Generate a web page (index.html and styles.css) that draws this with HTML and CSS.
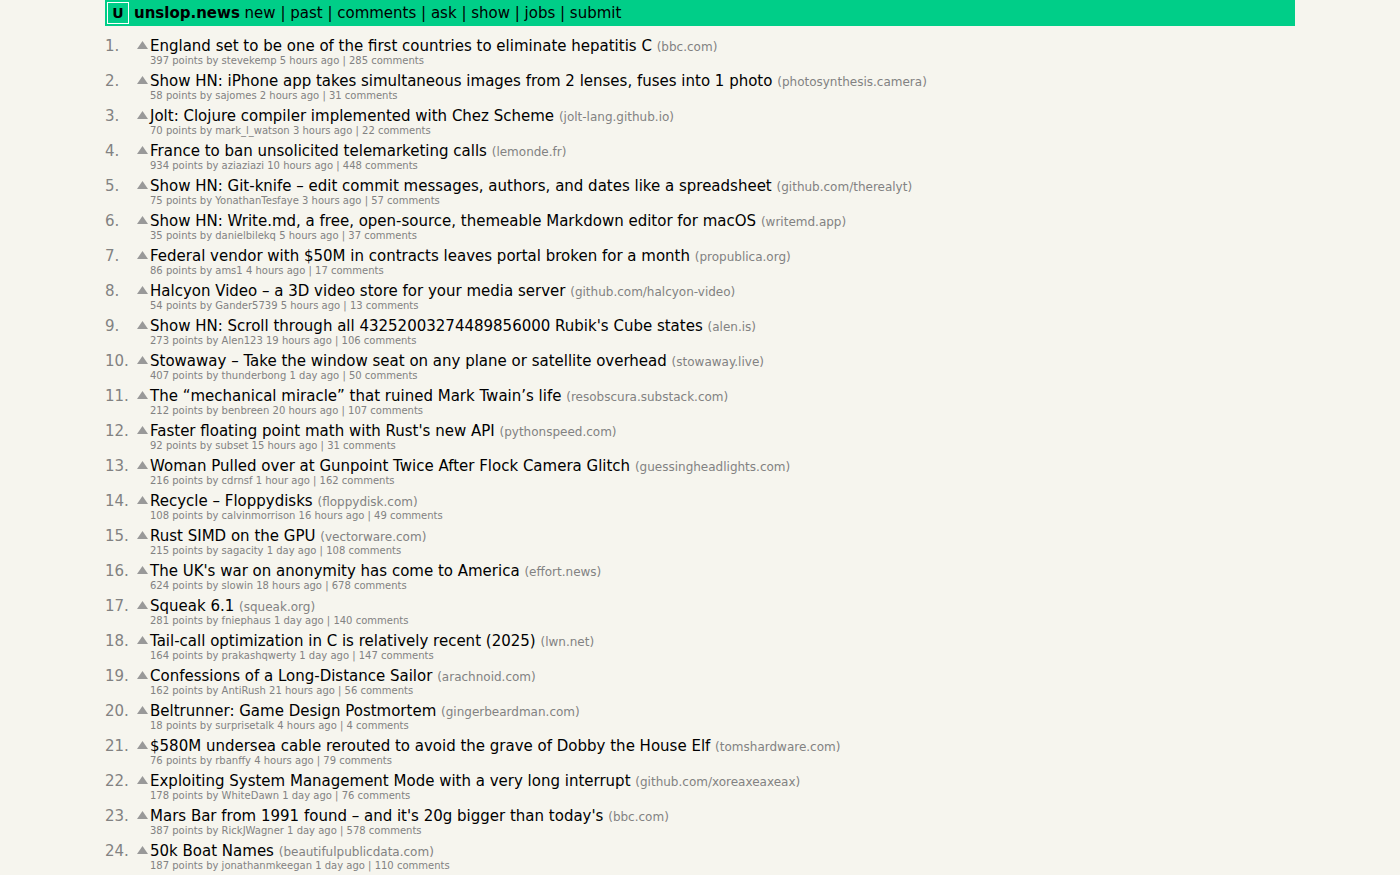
FILE: index.html
```html
<!DOCTYPE html>
<html lang="en">
<head>
    <meta charset="UTF-8">
    <meta name="viewport" content="width=device-width, initial-scale=1.0">
    <title>unslop.news</title>
    <link rel="stylesheet" href="styles.css">
</head>
<body>
    <div class="page">
        <header class="topbar">
            <a class="logo" href="#">U</a>
            <nav><a class="brand" href="#">unslop.news</a> <a href="#">new</a> | <a href="#">past</a> | <a href="#">comments</a> | <a href="#">ask</a> | <a href="#">show</a> | <a href="#">jobs</a> | <a href="#">submit</a></nav>
        </header>
        <main class="stories">
            <article class="story">
                <span class="rank">1.</span>
                <button class="vote" aria-label="upvote"></button>
                <div class="title"><a href="#">England set to be one of the first countries to eliminate hepatitis C</a> <span class="site">(<a href="#">bbc.com</a>)</span></div>
                <div class="subtext">397 points by <a href="#">stevekemp</a> 5 hours ago | <a href="#">285 comments</a></div>
            </article>
            <article class="story">
                <span class="rank">2.</span>
                <button class="vote" aria-label="upvote"></button>
                <div class="title"><a href="#">Show HN: iPhone app takes simultaneous images from 2 lenses, fuses into 1 photo</a> <span class="site">(<a href="#">photosynthesis.camera</a>)</span></div>
                <div class="subtext">58 points by <a href="#">sajomes</a> 2 hours ago | <a href="#">31 comments</a></div>
            </article>
            <article class="story">
                <span class="rank">3.</span>
                <button class="vote" aria-label="upvote"></button>
                <div class="title"><a href="#">Jolt: Clojure compiler implemented with Chez Scheme</a> <span class="site">(<a href="#">jolt-lang.github.io</a>)</span></div>
                <div class="subtext">70 points by <a href="#">mark_l_watson</a> 3 hours ago | <a href="#">22 comments</a></div>
            </article>
            <article class="story">
                <span class="rank">4.</span>
                <button class="vote" aria-label="upvote"></button>
                <div class="title"><a href="#">France to ban unsolicited telemarketing calls</a> <span class="site">(<a href="#">lemonde.fr</a>)</span></div>
                <div class="subtext">934 points by <a href="#">aziaziazi</a> 10 hours ago | <a href="#">448 comments</a></div>
            </article>
            <article class="story">
                <span class="rank">5.</span>
                <button class="vote" aria-label="upvote"></button>
                <div class="title"><a href="#">Show HN: Git-knife – edit commit messages, authors, and dates like a spreadsheet</a> <span class="site">(<a href="#">github.com/therealyt</a>)</span></div>
                <div class="subtext">75 points by <a href="#">YonathanTesfaye</a> 3 hours ago | <a href="#">57 comments</a></div>
            </article>
            <article class="story">
                <span class="rank">6.</span>
                <button class="vote" aria-label="upvote"></button>
                <div class="title"><a href="#">Show HN: Write.md, a free, open-source, themeable Markdown editor for macOS</a> <span class="site">(<a href="#">writemd.app</a>)</span></div>
                <div class="subtext">35 points by <a href="#">danielbilekq</a> 5 hours ago | <a href="#">37 comments</a></div>
            </article>
            <article class="story">
                <span class="rank">7.</span>
                <button class="vote" aria-label="upvote"></button>
                <div class="title"><a href="#">Federal vendor with $50M in contracts leaves portal broken for a month</a> <span class="site">(<a href="#">propublica.org</a>)</span></div>
                <div class="subtext">86 points by <a href="#">ams1</a> 4 hours ago | <a href="#">17 comments</a></div>
            </article>
            <article class="story">
                <span class="rank">8.</span>
                <button class="vote" aria-label="upvote"></button>
                <div class="title"><a href="#">Halcyon Video – a 3D video store for your media server</a> <span class="site">(<a href="#">github.com/halcyon-video</a>)</span></div>
                <div class="subtext">54 points by <a href="#">Gander5739</a> 5 hours ago | <a href="#">13 comments</a></div>
            </article>
            <article class="story">
                <span class="rank">9.</span>
                <button class="vote" aria-label="upvote"></button>
                <div class="title"><a href="#">Show HN: Scroll through all 43252003274489856000 Rubik's Cube states</a> <span class="site">(<a href="#">alen.is</a>)</span></div>
                <div class="subtext">273 points by <a href="#">Alen123</a> 19 hours ago | <a href="#">106 comments</a></div>
            </article>
            <article class="story">
                <span class="rank">10.</span>
                <button class="vote" aria-label="upvote"></button>
                <div class="title"><a href="#">Stowaway – Take the window seat on any plane or satellite overhead</a> <span class="site">(<a href="#">stowaway.live</a>)</span></div>
                <div class="subtext">407 points by <a href="#">thunderbong</a> 1 day ago | <a href="#">50 comments</a></div>
            </article>
            <article class="story">
                <span class="rank">11.</span>
                <button class="vote" aria-label="upvote"></button>
                <div class="title"><a href="#">The “mechanical miracle” that ruined Mark Twain’s life</a> <span class="site">(<a href="#">resobscura.substack.com</a>)</span></div>
                <div class="subtext">212 points by <a href="#">benbreen</a> 20 hours ago | <a href="#">107 comments</a></div>
            </article>
            <article class="story">
                <span class="rank">12.</span>
                <button class="vote" aria-label="upvote"></button>
                <div class="title"><a href="#">Faster floating point math with Rust's new API</a> <span class="site">(<a href="#">pythonspeed.com</a>)</span></div>
                <div class="subtext">92 points by <a href="#">subset</a> 15 hours ago | <a href="#">31 comments</a></div>
            </article>
            <article class="story">
                <span class="rank">13.</span>
                <button class="vote" aria-label="upvote"></button>
                <div class="title"><a href="#">Woman Pulled over at Gunpoint Twice After Flock Camera Glitch</a> <span class="site">(<a href="#">guessingheadlights.com</a>)</span></div>
                <div class="subtext">216 points by <a href="#">cdrnsf</a> 1 hour ago | <a href="#">162 comments</a></div>
            </article>
            <article class="story">
                <span class="rank">14.</span>
                <button class="vote" aria-label="upvote"></button>
                <div class="title"><a href="#">Recycle – Floppydisks</a> <span class="site">(<a href="#">floppydisk.com</a>)</span></div>
                <div class="subtext">108 points by <a href="#">calvinmorrison</a> 16 hours ago | <a href="#">49 comments</a></div>
            </article>
            <article class="story">
                <span class="rank">15.</span>
                <button class="vote" aria-label="upvote"></button>
                <div class="title"><a href="#">Rust SIMD on the GPU</a> <span class="site">(<a href="#">vectorware.com</a>)</span></div>
                <div class="subtext">215 points by <a href="#">sagacity</a> 1 day ago | <a href="#">108 comments</a></div>
            </article>
            <article class="story">
                <span class="rank">16.</span>
                <button class="vote" aria-label="upvote"></button>
                <div class="title"><a href="#">The UK's war on anonymity has come to America</a> <span class="site">(<a href="#">effort.news</a>)</span></div>
                <div class="subtext">624 points by <a href="#">slowin</a> 18 hours ago | <a href="#">678 comments</a></div>
            </article>
            <article class="story">
                <span class="rank">17.</span>
                <button class="vote" aria-label="upvote"></button>
                <div class="title"><a href="#">Squeak 6.1</a> <span class="site">(<a href="#">squeak.org</a>)</span></div>
                <div class="subtext">281 points by <a href="#">fniephaus</a> 1 day ago | <a href="#">140 comments</a></div>
            </article>
            <article class="story">
                <span class="rank">18.</span>
                <button class="vote" aria-label="upvote"></button>
                <div class="title"><a href="#">Tail-call optimization in C is relatively recent (2025)</a> <span class="site">(<a href="#">lwn.net</a>)</span></div>
                <div class="subtext">164 points by <a href="#">prakashqwerty</a> 1 day ago | <a href="#">147 comments</a></div>
            </article>
            <article class="story">
                <span class="rank">19.</span>
                <button class="vote" aria-label="upvote"></button>
                <div class="title"><a href="#">Confessions of a Long-Distance Sailor</a> <span class="site">(<a href="#">arachnoid.com</a>)</span></div>
                <div class="subtext">162 points by <a href="#">AntiRush</a> 21 hours ago | <a href="#">56 comments</a></div>
            </article>
            <article class="story">
                <span class="rank">20.</span>
                <button class="vote" aria-label="upvote"></button>
                <div class="title"><a href="#">Beltrunner: Game Design Postmortem</a> <span class="site">(<a href="#">gingerbeardman.com</a>)</span></div>
                <div class="subtext">18 points by <a href="#">surprisetalk</a> 4 hours ago | <a href="#">4 comments</a></div>
            </article>
            <article class="story">
                <span class="rank">21.</span>
                <button class="vote" aria-label="upvote"></button>
                <div class="title"><a href="#">$580M undersea cable rerouted to avoid the grave of Dobby the House Elf</a> <span class="site">(<a href="#">tomshardware.com</a>)</span></div>
                <div class="subtext">76 points by <a href="#">rbanffy</a> 4 hours ago | <a href="#">79 comments</a></div>
            </article>
            <article class="story">
                <span class="rank">22.</span>
                <button class="vote" aria-label="upvote"></button>
                <div class="title"><a href="#">Exploiting System Management Mode with a very long interrupt</a> <span class="site">(<a href="#">github.com/xoreaxeaxeax</a>)</span></div>
                <div class="subtext">178 points by <a href="#">WhiteDawn</a> 1 day ago | <a href="#">76 comments</a></div>
            </article>
            <article class="story">
                <span class="rank">23.</span>
                <button class="vote" aria-label="upvote"></button>
                <div class="title"><a href="#">Mars Bar from 1991 found – and it's 20g bigger than today's</a> <span class="site">(<a href="#">bbc.com</a>)</span></div>
                <div class="subtext">387 points by <a href="#">RickJWagner</a> 1 day ago | <a href="#">578 comments</a></div>
            </article>
            <article class="story">
                <span class="rank">24.</span>
                <button class="vote" aria-label="upvote"></button>
                <div class="title"><a href="#">50k Boat Names</a> <span class="site">(<a href="#">beautifulpublicdata.com</a>)</span></div>
                <div class="subtext">187 points by <a href="#">jonathanmkeegan</a> 1 day ago | <a href="#">110 comments</a></div>
            </article>
        </main>
    </div>
</body>
</html>
```

FILE: styles.css
```css
body {
    margin: 0;
    background: #f6f5ee;
    color: #828282;
    font-family: Verdana, "DejaVu Sans", sans-serif;
    font-size: 15px;
}

a {
    color: inherit;
    text-decoration: none;
}

a:hover {
    text-decoration: underline;
}

.page {
    width: 85%;
    margin: 0 auto;
}

.topbar {
    display: flex;
    align-items: center;
    gap: 5px;
    padding: 2px;
    background: #00ce88;
    color: #000;
    line-height: 22px;
}

.logo {
    box-sizing: border-box;
    width: 22px;
    height: 22px;
    border: 1px solid #fff;
    font-size: 14px;
    font-weight: bold;
    line-height: 20px;
    text-align: center;
}

.brand {
    font-weight: bold;
}

.stories {
    padding-top: 11px;
}

.story {
    display: grid;
    grid-template-columns: 32px 13px 1fr;
    margin-bottom: 5px;
}

.rank,
.title {
    line-height: 18px;
}

.title {
    color: #000;
}

.vote {
    width: 11px;
    height: 8px;
    margin-top: 4px;
    padding: 0;
    border: none;
    background: #999;
    clip-path: polygon(50% 0, 100% 100%, 0 100%);
    cursor: pointer;
}

.site {
    color: #828282;
    font-size: 12px;
    line-height: 12px;
}

.subtext {
    grid-column: 3;
    font-size: 10px;
    line-height: 12px;
}
```
